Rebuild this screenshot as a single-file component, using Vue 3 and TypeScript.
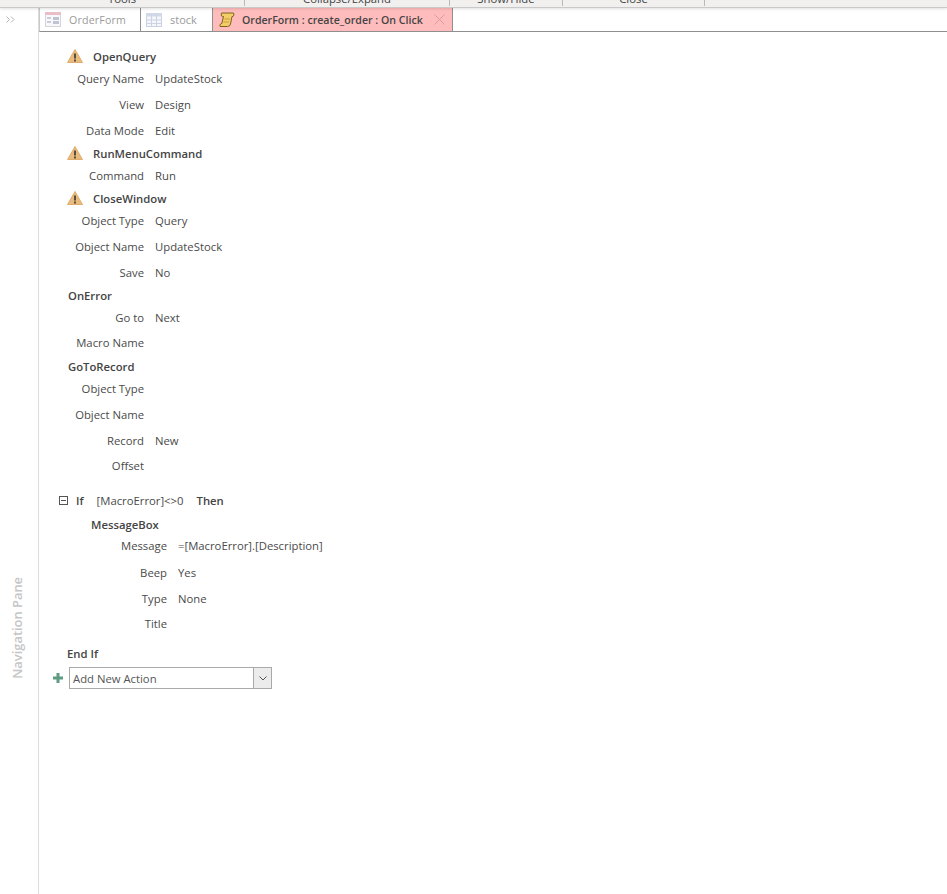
<script setup lang="ts">
interface Row {
  kind: 'warn' | 'head' | 'arg'
  label: string
  value?: string
  center: number
}
const centers = (rows: Omit<Row, 'center'>[], ys: number[]): (Row & { gap: number })[] =>
  rows.map((r, i) => ({ ...r, center: ys[i], gap: i === 0 ? 0 : ys[i] - ys[i - 1] - 20 }))

const first = centers(
  [
    { kind: 'warn', label: 'OpenQuery' },
    { kind: 'arg', label: 'Query Name', value: 'UpdateStock' },
    { kind: 'arg', label: 'View', value: 'Design' },
    { kind: 'arg', label: 'Data Mode', value: 'Edit' },
    { kind: 'warn', label: 'RunMenuCommand' },
    { kind: 'arg', label: 'Command', value: 'Run' },
    { kind: 'warn', label: 'CloseWindow' },
    { kind: 'arg', label: 'Object Type', value: 'Query' },
    { kind: 'arg', label: 'Object Name', value: 'UpdateStock' },
    { kind: 'arg', label: 'Save', value: 'No' },
    { kind: 'head', label: 'OnError' },
    { kind: 'arg', label: 'Go to', value: 'Next' },
    { kind: 'arg', label: 'Macro Name' },
    { kind: 'head', label: 'GoToRecord' },
    { kind: 'arg', label: 'Object Type' },
    { kind: 'arg', label: 'Object Name' },
    { kind: 'arg', label: 'Record', value: 'New' },
    { kind: 'arg', label: 'Offset' },
  ],
  [57, 79, 105, 131, 154, 176, 199, 221, 247, 273, 296, 318, 343, 367, 389, 415, 441, 466],
)
const inner = centers(
  [
    { kind: 'head', label: 'MessageBox' },
    { kind: 'arg', label: 'Message', value: '=[MacroError].[Description]' },
    { kind: 'arg', label: 'Beep', value: 'Yes' },
    { kind: 'arg', label: 'Type', value: 'None' },
    { kind: 'arg', label: 'Title' },
  ],
  [525, 546, 573, 599, 624],
)
const ribbon = [
  { label: 'Tools', width: 245 },
  { label: 'Collapse/Expand', width: 205 },
  { label: 'Show/Hide', width: 113 },
  { label: 'Close', width: 142 },
]
</script>

<template>
  <div class="app">
    <div class="ribbon">
      <div v-for="g in ribbon" :key="g.label" class="group" :style="{ width: g.width + 'px' }">
        <span>{{ g.label }}</span>
      </div>
    </div>
    <div class="main">
      <aside class="nav">
        <svg class="chev" width="9" height="7" viewBox="0 0 9 7">
          <path d="M.5.500 3.500 3.500.5 6.500M5 .500 8 3.500 5 6.500" fill="none" stroke="#b5b5b5" />
        </svg>
        <div class="navlabel">Navigation Pane</div>
      </aside>
      <section class="work">
        <div class="tabs">
          <div class="tab t1">
            <svg class="dim" width="16" height="15" viewBox="0 0 16 15">
              <rect x="0.5" y="0.5" width="15" height="14" fill="#f7f5f7" stroke="#c3c8d4" />
              <rect x="0" y="0" width="16" height="3" fill="#e3a9b4" />
              <path d="M2 6h4M2 10h4" stroke="#a4abbd" stroke-width="1.4" />
              <rect x="8" y="5" width="6" height="3" fill="#a9b1c4" />
              <rect x="8" y="9" width="6" height="3" fill="#a9b1c4" />
            </svg>
            <span>OrderForm</span>
          </div>
          <div class="tab t2">
            <svg class="dim" width="16" height="14" viewBox="0 0 16 14">
              <rect x="0.5" y="0.5" width="15" height="13" fill="#f2f4fa" stroke="#b9c2d8" />
              <rect x="0" y="0" width="16" height="3.5" fill="#c4cde2" />
              <path d="M5.5 0v14M10.5 0v14M0 7h16M0 10.500h16" stroke="#bcc5da" />
            </svg>
            <span>stock</span>
          </div>
          <div class="tab t3">
            <svg width="16" height="15" viewBox="0 0 16 15">
              <path d="M2.500 1H14.500Q15.800 3 14 4.500H13L11.500 12Q11 14.500 8.500 14.500H1Q.3 13 2 11.500H2.800L4.500 4.500Q3 4.500 2.500 4Q2 2.500 2.500 1z" fill="#f2cd68" stroke="#7d6220" stroke-width="1" stroke-linejoin="round" />
              <path d="M5.500 7h5.500M4.500 10h5.500" stroke="#c99f38" />
            </svg>
            <b>OrderForm : create_order : On Click</b>
            <svg class="close" width="11" height="11" viewBox="0 0 11 11">
              <path d="M.5.500l10 10M10.500.500l-10 10" stroke="#dc9c9c" stroke-width="1" />
            </svg>
          </div>
          <div class="tabfill"></div>
        </div>
        <div class="macro">
          <div
            v-for="(r, i) in first"
            :key="i"
            class="row"
            :class="r.kind"
            :style="{ marginTop: r.gap + 'px' }"
          >
            <template v-if="r.kind === 'arg'">
              <span class="lab">{{ r.label }}</span><span class="val">{{ r.value }}</span>
            </template>
            <template v-else>
              <svg v-if="r.kind === 'warn'" class="warn-ic" width="16" height="14" viewBox="0 0 16 14">
                <path d="M8 .500 15.500 13.500H.5z" fill="#e8bb7e" stroke="#e0ad6c" stroke-linejoin="round" />
                <path d="M8 4.500v5M8 10.500v2" stroke="#3f3a33" stroke-width="1.700" />
              </svg>
              <b>{{ r.label }}</b>
            </template>
          </div>

          <div class="ifrow">
            <span class="minus"></span>
            <b class="kw-if">If</b>
            <span class="cond">[MacroError]&lt;&gt;0</span>
            <b>Then</b>
          </div>
          <div class="ifbody">
            <div
              v-for="(r, i) in inner"
              :key="i"
              class="row"
              :class="r.kind"
              :style="{ marginTop: r.gap + 'px' }"
            >
              <template v-if="r.kind === 'arg'">
                <span class="lab">{{ r.label }}</span><span class="val">{{ r.value }}</span>
              </template>
              <b v-else>{{ r.label }}</b>
            </div>
          </div>
          <div class="endif"><b>End If</b></div>
          <div class="addrow">
            <svg width="10" height="10" viewBox="0 0 10 10">
              <path d="M5 0v10M0 5h10" stroke="#5f9c84" stroke-width="3" />
            </svg>
            <div class="combo">
              <span>Add New Action</span>
              <div class="drop">
                <svg width="8" height="5" viewBox="0 0 8 5">
                  <path d="M.5.500 4 4 7.500.500" fill="none" stroke="#555" stroke-width="1" />
                </svg>
              </div>
            </div>
          </div>
        </div>
      </section>
    </div>
  </div>
</template>

<style scoped>
.app {
  width: 947px;
  height: 894px;
  overflow: hidden;
  display: flex;
  flex-direction: column;
  background: #fff;
  font-family: "Open Sans", "Noto Sans", sans-serif;
  font-size: 11.3px;
  color: #4a4a4a;
}
.ribbon {
  flex: none;
  height: 8px;
  box-sizing: border-box;
  display: flex;
  background: #f1f0ef;
  border-bottom: 1px solid #c9c9c9;
  box-shadow: 0 1px 3px rgba(0, 0, 0, 0.12);
  overflow: hidden;
  position: relative;
  z-index: 1;
}
.group {
  flex: none;
  height: 6px;
  box-sizing: border-box;
  border-right: 1px solid #b9b9b9;
  text-align: center;
  line-height: 1;
  overflow: hidden;
}
.group span {
  display: block;
  margin-top: -8px;
  font-size: 11.3px;
  line-height: 14px;
  color: #444;
}
.main {
  flex: 1;
  display: flex;
  min-height: 0;
}
.nav {
  flex: none;
  width: 39px;
  box-sizing: border-box;
  border-right: 1px solid #dcdcdc;
  display: flex;
  flex-direction: column;
  align-items: center;
  justify-content: space-between;
  padding-top: 8px;
  padding-bottom: 215px;
  padding-right: 5px;
}
.chev {
  align-self: flex-start;
  margin-left: 6px;
}
.navlabel {
  writing-mode: vertical-rl;
  transform: rotate(180deg);
  font-weight: 600;
  font-size: 12.900px;
  color: #c6c6c6;
  white-space: nowrap;
}
.work {
  flex: 1;
  min-width: 0;
}
.tabs {
  display: flex;
  height: 24px;
}
.tab {
  flex: none;
  height: 24px;
  box-sizing: border-box;
  display: flex;
  align-items: center;
  border-bottom: 1px solid #8f8f8f;
}
.dim {
  opacity: 0.75;
}
.t1 {
  width: 102px;
  padding-left: 5px;
  gap: 8px;
  color: #9a9a9a;
  border-right: 1px solid #8f8f8f;
  border-left: 1px solid #c9c9c9;
  font-size: 10.600px;
  letter-spacing: 0.2px;
}
.t2 {
  width: 72px;
  padding-left: 5px;
  gap: 8px;
  color: #9a9a9a;
  border-right: 1px solid #8f8f8f;
  font-size: 11px;
}
.t3 {
  width: 240px;
  padding-left: 6px;
  gap: 7px;
  background: #ffbcbc;
  border-right: 1px solid #8f8f8f;
  color: #444;
  white-space: nowrap;
}
.t3 b {
  font-size: 10.600px;
  font-weight: 600;
  width: 180px;
  flex: none;
}
.close {
  flex: none;
  margin-left: 5px;
}
.tabfill {
  flex: 1;
  border-bottom: 1px solid #8f8f8f;
}
.macro {
  padding-top: 14px;
  position: relative;
}
.row {
  height: 20px;
  display: flex;
  align-items: center;
  white-space: nowrap;
}
.row b,
.ifrow b,
.endif b {
  font-weight: 600;
  color: #444;
}
.warn {
  padding-left: 28px;
}
.warn-ic {
  margin-right: 10px;
  flex: none;
}
.head {
  padding-left: 29px;
}
.lab {
  width: 105px;
  text-align: right;
  flex: none;
}
.val {
  margin-left: 11px;
}
.ifrow {
  height: 20px;
  margin-top: 15px;
  display: flex;
  align-items: center;
  padding-left: 20px;
}
.minus {
  width: 9px;
  height: 9px;
  box-sizing: border-box;
  border: 1px solid #555;
  position: relative;
  flex: none;
}
.minus::after {
  content: "";
  position: absolute;
  left: 1px;
  right: 1px;
  top: 3px;
  height: 1px;
  background: #555;
}
.kw-if {
  margin-left: 8px;
}
.cond {
  margin-left: 13px;
  margin-right: 13px;
}
.ifbody {
  margin-top: 4px;
}
.ifbody .head {
  padding-left: 52px;
}
.ifbody .lab {
  width: 128px;
}
.endif {
  height: 20px;
  margin-top: 10px;
  display: flex;
  align-items: center;
  padding-left: 28px;
}
.addrow {
  margin-top: 4px;
  display: flex;
  align-items: center;
  padding-left: 14px;
  gap: 6px;
}
.combo {
  width: 203px;
  height: 22px;
  box-sizing: border-box;
  border: 1px solid #a9a9a9;
  display: flex;
  align-items: center;
  justify-content: space-between;
  padding-left: 3px;
  color: #555;
}
.drop {
  width: 18px;
  height: 20px;
  box-sizing: border-box;
  background: #ececec;
  border-left: 1px solid #a9a9a9;
  display: flex;
  align-items: center;
  justify-content: center;
}
</style>
